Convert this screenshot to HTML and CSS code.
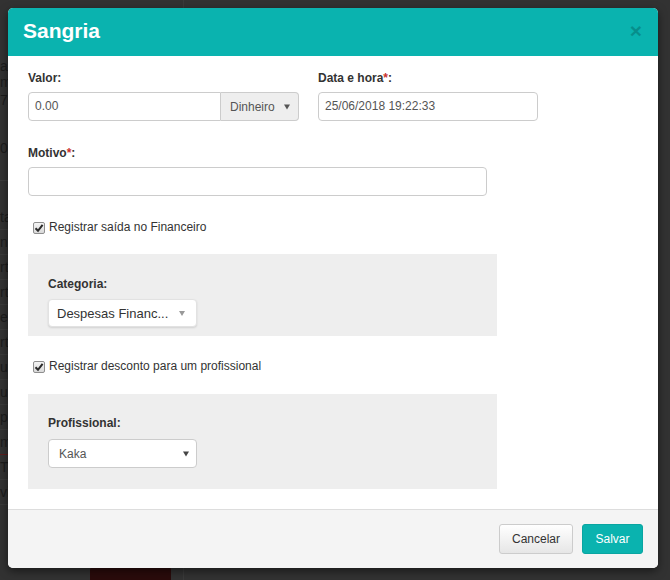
FILE: index.html
```html
<!DOCTYPE html>
<html lang="pt">
<head>
<meta charset="utf-8">
<title>Sangria</title>
<link rel="stylesheet" href="styles.css">
</head>
<body>
<div class="page">
  <div class="page-strip">
    <div class="frag f-a">a</div>
    <div class="frag">m</div>
    <div class="frag f-7">7</div>
    <div class="frag f-0">0</div>
    <div class="row">ta</div>
    <div class="row">nh</div>
    <div class="row">rt</div>
    <div class="row">rt</div>
    <div class="row">e</div>
    <div class="row">rt</div>
    <div class="row">ud</div>
    <div class="row">un</div>
    <div class="row">p</div>
    <div class="row row-red">m</div>
    <div class="row">T</div>
    <div class="row">vi</div>
    <div class="page-btn"></div>
  </div>
  <div class="page-main"></div>
</div>

<div class="modal">
  <div class="modal-header">
    <h4 class="modal-title">Sangria</h4>
    <span class="close">&times;</span>
  </div>
  <div class="modal-body">
    <div class="form-row">
      <div class="form-group g-valor">
        <label class="lbl">Valor:</label>
        <div class="input-group">
          <div class="input ig-input">0.00</div>
          <div class="ig-addon"><span>Dinheiro</span><svg class="caret" width="6" height="6" viewBox="0 0 6 6"><path d="M0 0.5H6L3 5.5Z" fill="#555"/></svg></div>
        </div>
      </div>
      <div class="form-group g-data">
        <label class="lbl">Data e hora<span class="req">*</span>:</label>
        <div class="input">25/06/2018 19:22:33</div>
      </div>
    </div>
    <div class="form-group g-motivo">
      <label class="lbl">Motivo<span class="req">*</span>:</label>
      <div class="input"></div>
    </div>
    <div class="check check-1">
      <span class="cbox"><svg width="10" height="10" viewBox="0 0 10 10"><path d="M1.5 5.2L4 7.8L8.6 1.8" fill="none" stroke="#2b2b2b" stroke-width="2"/></svg></span>
      <span>Registrar saída no Financeiro</span>
    </div>
    <div class="panel panel-1">
      <label class="lbl lbl-sel">Categoria:</label>
      <div class="select select-soft"><span>Despesas Financ...</span><svg class="caret" width="6" height="5" viewBox="0 0 6 5"><path d="M0 0H6L3 5Z" fill="#999"/></svg></div>
    </div>
    <div class="check check-2">
      <span class="cbox"><svg width="10" height="10" viewBox="0 0 10 10"><path d="M1.5 5.2L4 7.8L8.6 1.8" fill="none" stroke="#2b2b2b" stroke-width="2"/></svg></span>
      <span>Registrar desconto para um profissional</span>
    </div>
    <div class="panel panel-2">
      <label class="lbl lbl-sel2">Profissional:</label>
      <div class="select select-plain"><span>Kaka</span><svg class="caret" width="6" height="6" viewBox="0 0 6 6"><path d="M0 0.5H6L3 5.5Z" fill="#444"/></svg></div>
    </div>
  </div>
  <div class="modal-footer">
    <button class="btn btn-default">Cancelar</button>
    <button class="btn btn-primary">Salvar</button>
  </div>
</div>
</body>
</html>
```
FILE: styles.css
```css
* { box-sizing: border-box; }
html, body { margin: 0; padding: 0; }
body {
  background: #323232;
  font-family: "Liberation Sans", Arial, sans-serif;
  font-size: 12px;
  color: #333;
  width: 670px;
  height: 580px;
  overflow: hidden;
}
.page { display: flex; height: 580px; }
.page-strip {
  width: 184px;
  padding-top: 58px;
  color: #1c1c1c;
  font-size: 14px;
  border-right: 1px solid #3a3a3a;
  display: flex;
  flex-direction: column;
}
.frag { line-height: 16px; height: 16px; }
.f-7 { margin-top: 2px; }
.f-0 { margin-top: 32px; margin-bottom: 24px; border-bottom: 1px solid #3c3c3c; padding-bottom: 24px; height: auto; }
.row { height: 25px; line-height: 24px; border-bottom: 1px solid #3a3a3a; }
.row-red { border-bottom-color: #5b1c1c; }
.page-btn {
  margin-top: auto;
  margin-left: 90px;
  width: 81px;
  height: 13px;
  background: #2a0b0b;
  border-radius: 3px 3px 0 0;
}
.page-main { flex: 1; }

.modal {
  position: absolute;
  left: 8px;
  top: 8px;
  width: 650px;
  background: #fff;
  border-radius: 5px;
  overflow: hidden;
  box-shadow: 0 3px 9px rgba(0,0,0,0.5);
}
.modal-header {
  height: 48px;
  background: #0ab3af;
  display: flex;
  align-items: center;
  justify-content: space-between;
  padding: 0 16px 2px 15px;
}
.modal-title {
  margin: 0;
  font-size: 21px;
  font-weight: bold;
  color: #fff;
  line-height: 24px;
}
.close {
  font-size: 21px;
  font-weight: bold;
  line-height: 20px;
  color: #000;
  opacity: 0.2;
}
.modal-body { padding: 14px 20px 20px; }
.form-row { display: flex; gap: 19px; margin-bottom: 24px; }
.lbl {
  display: block;
  font-weight: bold;
  line-height: 17px;
  margin-bottom: 5px;
  color: #333;
}
.req { color: #c9302c; }
.g-valor { width: 271px; }
.g-data { width: 220px; }
.g-motivo { width: 459px; margin-bottom: 23px; }
.input {
  height: 29px;
  border: 1px solid #ccc;
  border-radius: 4px;
  padding: 0 6px;
  line-height: 27px;
  color: #555;
  background: #fff;
}
.input-group { display: flex; }
.ig-input { flex: 1; border-radius: 4px 0 0 4px; }
.ig-addon {
  width: 78px;
  height: 29px;
  border: 1px solid #ccc;
  border-left: 0;
  border-radius: 0 4px 4px 0;
  background: #eee;
  color: #555;
  display: flex;
  align-items: center;
  justify-content: space-between;
  padding: 0 8px 0 9px;
}
.check {
  display: flex;
  align-items: center;
  gap: 4px;
  line-height: 17px;
  padding-left: 5px;
  color: #333;
}
.check-1 { margin-bottom: 18px; }
.check-2 { margin-top: 22px; margin-bottom: 19px; }
.cbox {
  width: 12px;
  height: 12px;
  border: 1px solid #8f8f8f;
  border-radius: 2px;
  background: linear-gradient(#f4f4f4, #d9d9d9);
  display: flex;
  align-items: center;
  justify-content: center;
}
.panel { width: 469px; background: #eee; padding: 0 20px; }
.panel-1 { padding-top: 22px; padding-bottom: 9px; }
.panel-2 { padding-top: 21px; padding-bottom: 21px; }
.lbl-sel { margin-bottom: 6px; }
.lbl-sel2 { margin-bottom: 7px; }
.select {
  width: 149px;
  background: #fff;
  display: flex;
  align-items: center;
  justify-content: space-between;
  border-radius: 4px;
}
.select-soft {
  height: 28px;
  border: 1px solid #e2e2e2;
  box-shadow: 0 1px 2px rgba(0,0,0,0.12);
  font-size: 13px;
  color: #333;
  padding: 0 11px 0 8px;
}
.select-plain {
  height: 29px;
  border: 1px solid #ccc;
  color: #555;
  padding: 0 7px 0 10px;
}
.modal-footer {
  border-top: 1px solid #ddd;
  background: #f4f4f4;
  padding: 14px 15px;
  display: flex;
  justify-content: flex-end;
  gap: 9px;
}
.btn {
  height: 30px;
  padding: 0 12px;
  font-family: "Liberation Sans", Arial, sans-serif;
  font-size: 12px;
  border-radius: 3px;
  border: 1px solid;
  line-height: 28px;
}
.btn-default {
  background: linear-gradient(#fff, #e6e6e6);
  border-color: #ccc;
  color: #333;
  width: 74px;
}
.btn-primary {
  background: #0ab3af;
  border-color: #09a5a1;
  color: #fff;
  width: 61px;
}
```
